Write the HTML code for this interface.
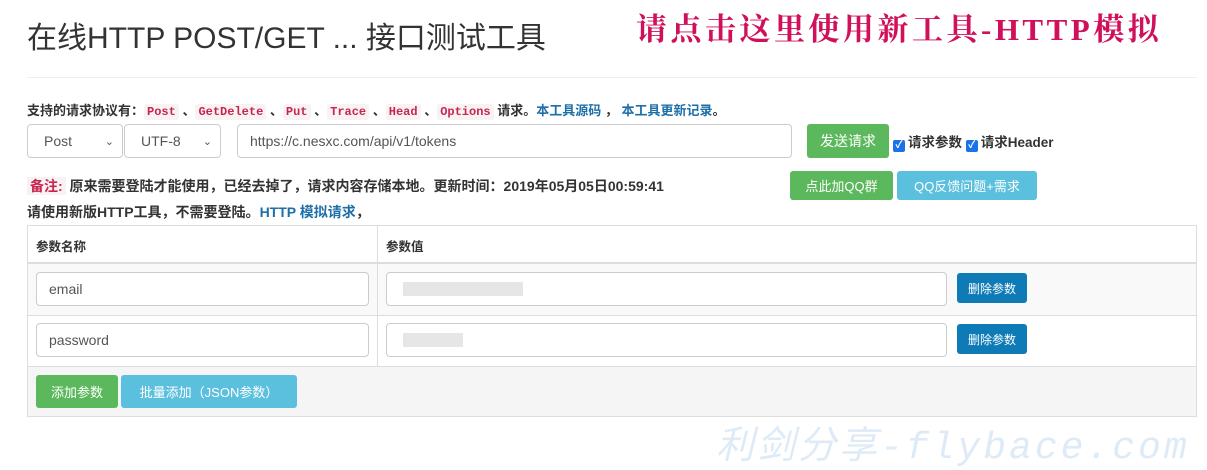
<!DOCTYPE html>
<html><head><meta charset="utf-8"><style>
*{box-sizing:border-box;margin:0;padding:0}
body{width:1207px;height:456px;background:#fff;font-family:"Liberation Sans","Noto Sans CJK SC",sans-serif;color:#333;position:relative;overflow:hidden;font-size:13px}
.a{position:absolute;white-space:nowrap}
.code{font-family:"Liberation Mono",monospace;color:#c7254e;background:#f9f2f4;padding:1px 3px;font-size:12px;border-radius:3px}
.lnk{color:#1e6fa8;font-weight:bold}
.inp{position:absolute;border:1px solid #ccc;border-radius:4px;background:#fff;font-size:14px;color:#555;padding-left:12px;display:flex;align-items:center}
.btn{position:absolute;color:#fff;border-radius:3px;display:flex;align-items:center;justify-content:center;font-size:13px}
.g{background:#5cb85c}.b{background:#5bc0de}.d{background:#0e7bb6;font-size:12px}
.cb{display:inline-block;width:12px;height:12px;background:#1a73e8;border-radius:2px;color:#fff;font-size:10px;line-height:12px;text-align:center;vertical-align:-1px;margin-right:3px}
</style></head><body>
<div class="a" style="left:27px;top:13px;font-size:30px;color:#333">在线HTTP POST/GET ... 接口测试工具</div>
<div class="a" style="left:636px;top:4px;font-size:31px;font-weight:bold;color:#d0105a;font-family:'Liberation Serif','Noto Serif CJK SC',serif;letter-spacing:3.5px">请点击这里使用新工具-HTTP模拟</div>
<div class="a" style="left:27px;top:77px;width:1170px;border-top:1px solid #eee"></div>
<div class="a" style="left:27px;top:100px;font-weight:bold;font-size:13px">支持的请求协议有：<span class="code">Post</span> 、<span class="code">GetDelete</span> 、<span class="code">Put</span> 、<span class="code">Trace</span> 、<span class="code">Head</span> 、<span class="code">Options</span> 请求。<span class="lnk">本工具源码</span> ， <span class="lnk">本工具更新记录</span>。</div>
<div class="inp" style="left:27px;top:124px;width:96px;height:34px;padding-left:16px">Post<span style="position:absolute;right:8px;font-size:11px">⌄</span></div>
<div class="inp" style="left:124px;top:124px;width:97px;height:34px;padding-left:16px">UTF-8<span style="position:absolute;right:8px;font-size:11px">⌄</span></div>
<div class="inp" style="left:237px;top:124px;width:555px;height:34px">https://c.nesxc.com/api/v1/tokens</div>
<div class="btn g" style="left:807px;top:124px;width:82px;height:34px;font-size:14px">发送请求</div>
<div class="a" style="left:893px;top:131px;font-weight:bold;font-size:13.5px"><span class="cb">✓</span>请求参数 <span class="cb">✓</span>请求Header</div>
<div class="a" style="left:27px;top:176px;font-weight:bold;font-size:14px"><span style="color:#c7254e;background:#f9f2f4;padding:1px 3px">备注:</span> 原来需要登陆才能使用，已经去掉了，请求内容存储本地。更新时间：2019年05月05日00:59:41</div>
<div class="btn g" style="left:790px;top:171px;width:103px;height:29px">点此加QQ群</div>
<div class="btn b" style="left:897px;top:171px;width:140px;height:29px">QQ反馈问题+需求</div>
<div class="a" style="left:27px;top:202px;font-weight:bold;font-size:14px">请使用新版HTTP工具，不需要登陆。<span class="lnk">HTTP 模拟请求</span>，</div>
<div class="a" style="left:27px;top:225px;width:1170px;height:192px;border:1px solid #ddd"></div>
<div class="a" style="left:28px;top:264px;width:1168px;height:52px;background:#f9f9f9"></div>
<div class="a" style="left:28px;top:367px;width:1168px;height:49px;background:#f5f5f5"></div>
<div class="a" style="left:28px;top:262px;width:1168px;border-top:2px solid #ddd"></div>
<div class="a" style="left:28px;top:315px;width:1168px;border-top:1px solid #ddd"></div>
<div class="a" style="left:28px;top:366px;width:1168px;border-top:1px solid #ddd"></div>
<div class="a" style="left:377px;top:226px;height:140px;border-left:1px solid #ddd"></div>
<div class="a" style="left:36px;top:236px;font-weight:bold;font-size:12.5px">参数名称</div>
<div class="a" style="left:386px;top:236px;font-weight:bold;font-size:12.5px">参数值</div>
<div class="inp" style="left:36px;top:272px;width:333px;height:34px">email</div>
<div class="inp" style="left:386px;top:272px;width:561px;height:34px"><span style="display:block;width:120px;height:14px;background:#e6e6e6;margin-left:4px"></span></div>
<div class="btn d" style="left:957px;top:273px;width:70px;height:30px">删除参数</div>
<div class="inp" style="left:36px;top:323px;width:333px;height:34px">password</div>
<div class="inp" style="left:386px;top:323px;width:561px;height:34px"><span style="display:block;width:60px;height:14px;background:#e6e6e6;margin-left:4px"></span></div>
<div class="btn d" style="left:957px;top:324px;width:70px;height:30px">删除参数</div>
<div class="btn g" style="left:36px;top:375px;width:82px;height:33px">添加参数</div>
<div class="btn b" style="left:121px;top:375px;width:176px;height:33px">批量添加（JSON参数）</div>
<div class="a" style="left:716px;top:414px;font-size:38px;color:#deebf7;font-style:italic;letter-spacing:3px;font-family:'Liberation Mono','Noto Sans CJK SC',monospace">利剑分享-flybace.com</div>
</body></html>
